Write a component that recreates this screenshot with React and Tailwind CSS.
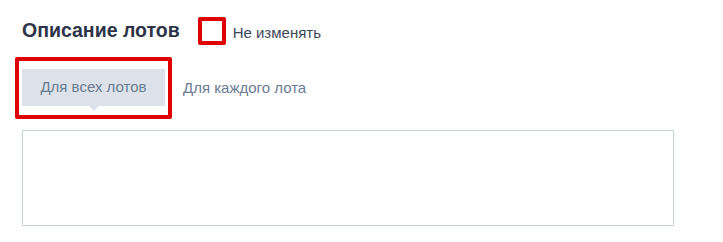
import React, { useState } from "react";

export default function App() {
  const [tab, setTab] = useState("all");

  return (
    <div className="w-[723px] h-[242px] bg-white pl-[22px] pt-[17px] font-['Liberation_Sans',Arial,sans-serif]">

      {/* Header */}
      <div className="flex items-center h-[28px]">
        <h2 className="text-[19.5px] font-bold text-[#2d3448] leading-none">
          Описание лотов
        </h2>
        <div className="ml-[18px] w-[28px] h-[28px] border-4 border-[#e10000] rounded-[2px]" />
        <span className="ml-[7px] mt-[4px] text-[15px] text-[#3e4757]">
          Не изменять
        </span>
      </div>

      {/* Tabs */}
      <div className="flex items-center mt-[12px] -ml-[7px]">
        <div className="border-4 border-[#e10000] rounded-[2px] px-[3px] pt-[8px] pb-[9px]">
          <button
            onClick={() => setTab("all")}
            className="relative w-[143px] h-[37px] bg-[#dde2ea] text-[15px] text-[#6b7b91]"
          >
            Для всех лотов
            {tab === "all" && (
              <span className="absolute left-1/2 -translate-x-1/2 top-full w-0 h-0
                border-l-[5px] border-r-[5px] border-t-[5px]
                border-l-transparent border-r-transparent border-t-[#dde2ea]" />
            )}
          </button>
        </div>
        <button
          onClick={() => setTab("each")}
          className="ml-[11px] text-[15px] text-[#6b7b91]"
        >
          Для каждого лота
        </button>
      </div>

      {/* Textarea */}
      <textarea
        className="block mt-[11px] w-[652px] h-[96px] border border-[#c9d1dd] resize-none outline-none"
      />
    </div>
  );
}
